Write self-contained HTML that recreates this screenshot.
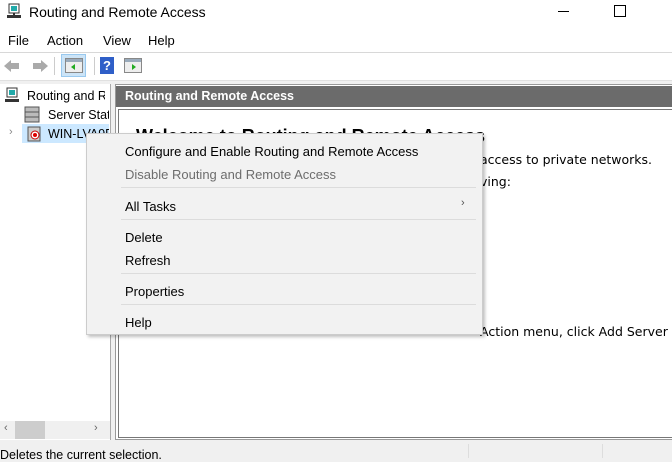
<html><head><style>
body{margin:0;width:672px;height:458px;overflow:hidden;background:#f0f0f0;font-family:"Liberation Sans",sans-serif;position:relative;font-size:12.5px;color:#000}
.a{position:absolute}
.mi{position:absolute;left:38px;font-size:13px}
.sep{position:absolute;left:34px;right:6px;height:1px;background:#dcdcdc}
</style></head><body>
<div class="a" style="left:0;top:0;width:672px;height:52px;background:#fff"></div>
<svg class="a" style="left:6px;top:3px" width="16" height="16"><rect x="3" y="1" width="10" height="9" fill="#fff" stroke="#333"/><rect x="5" y="3" width="6" height="5" fill="#2aa"/><rect x="1" y="12" width="14" height="3" fill="#333"/><rect x="7" y="10" width="2" height="2" fill="#333"/></svg>
<div class="a" style="left:29px;top:4px;font-size:14px">Routing and Remote Access</div>
<div class="a" style="left:558px;top:11px;width:11px;height:1px;background:#000"></div>
<div class="a" style="left:614px;top:5px;width:10px;height:10px;border:1px solid #000"></div>
<div class="a" style="left:8px;top:33px;font-size:13px">File</div>
<div class="a" style="left:47px;top:33px;font-size:13px">Action</div>
<div class="a" style="left:103px;top:33px;font-size:13px">View</div>
<div class="a" style="left:148px;top:33px;font-size:13px">Help</div>
<div class="a" style="left:0;top:52px;width:672px;height:1px;background:#d8d8d8"></div>
<div class="a" style="left:0;top:53px;width:672px;height:27px;background:#fff"></div>
<div class="a" style="left:0;top:80px;width:672px;height:4px;background:#f0f0f0;border-top:1px solid #e0e0e0"></div>
<svg class="a" style="left:2px;top:58px" width="48" height="16"><path d="M2 8 L9 2 V5 H17 V11 H9 V14Z" fill="#aaa"/><path d="M46 8 L39 2 V5 H31 V11 H39 V14Z" fill="#aaa"/></svg>
<div class="a" style="left:54px;top:57px;width:1px;height:18px;background:#ccc"></div>
<div class="a" style="left:61px;top:54px;width:25px;height:23px;background:#cce4f7;border:1px solid #99c9ef;box-sizing:border-box"></div>
<svg class="a" style="left:65px;top:58px" width="18" height="15"><rect x=".5" y=".5" width="17" height="14" fill="#eee" stroke="#888"/><rect x="1" y="1" width="16" height="3" fill="#9ab"/><path d="M10 6 L6 9 L10 12Z" fill="#2a2"/></svg>
<div class="a" style="left:94px;top:57px;width:1px;height:18px;background:#ccc"></div>
<div class="a" style="left:100px;top:57px;width:14px;height:17px;background:#2f5fc8;color:#fff;font-weight:bold;font-size:13px;text-align:center;line-height:17px">?</div>
<svg class="a" style="left:124px;top:58px" width="18" height="15"><rect x=".5" y=".5" width="17" height="14" fill="#eee" stroke="#888"/><rect x="1" y="1" width="16" height="3" fill="#9ab"/><path d="M8 6 L12 9 L8 12Z" fill="#2a2"/></svg>
<div class="a" style="left:0;top:84px;width:110px;height:356px;background:#fff;border-right:1px solid #aaa"></div>
<svg class="a" style="left:4px;top:87px" width="16" height="16"><rect x="3" y="1" width="10" height="9" fill="#fff" stroke="#333"/><rect x="5" y="3" width="6" height="5" fill="#2aa"/><rect x="1" y="12" width="14" height="3" fill="#333"/></svg>
<div class="a" style="left:27px;top:89px;width:78px;overflow:hidden;white-space:nowrap">Routing and Remote</div>
<svg class="a" style="left:24px;top:106px" width="18" height="17"><rect x="1" y="1" width="14" height="15" fill="#bbb" stroke="#555"/><path d="M1 6H15M1 11H15" stroke="#555"/></svg>
<div class="a" style="left:48px;top:108px;width:61px;overflow:hidden;white-space:nowrap">Server Status</div>
<div class="a" style="left:22px;top:124px;width:87px;height:19px;background:#cce8ff"></div>
<div class="a" style="left:9px;top:126px;color:#888;font-size:11px">›</div>
<svg class="a" style="left:26px;top:125px" width="18" height="17"><rect x="2" y="2" width="12" height="14" fill="#ccc" stroke="#555"/><circle cx="9" cy="10" r="4" fill="#fff" stroke="#c00"/><circle cx="9" cy="10" r="2" fill="#d00"/></svg>
<div class="a" style="left:48px;top:127px;width:61px;overflow:hidden;white-space:nowrap">WIN-LVA9BEFG</div>
<div class="a" style="left:0;top:421px;width:110px;height:18px;background:#f0f0f0"></div>
<div class="a" style="left:15px;top:421px;width:30px;height:18px;background:#cdcdcd"></div>
<div class="a" style="left:4px;top:422px;color:#666;font-size:11px">‹</div>
<div class="a" style="left:94px;top:422px;color:#666;font-size:11px">›</div>
<div class="a" style="left:115px;top:84px;width:557px;height:356px;border:1px solid #999;border-right:none;background:#fff;box-sizing:border-box"></div>
<div class="a" style="left:116px;top:86px;width:556px;height:21px;background:#6b6b6b;color:#fff;font-weight:bold;font-size:12.5px;line-height:21px;padding-left:9px;box-sizing:border-box">Routing and Remote Access</div>
<div class="a" style="left:118px;top:109px;width:554px;height:329px;border:1px solid #777;border-right:none;box-sizing:border-box"></div>
<div class="a" style="left:136px;top:126px;font-weight:bold;font-size:18px">Welcome to Routing and Remote Access</div>
<div class="a" style="left:480px;top:152px;font-family:'DejaVu Sans',sans-serif;font-size:12.5px">access to private networks.</div>
<div class="a" style="left:480px;top:174px;font-family:'DejaVu Sans',sans-serif;font-size:12.5px">ving:</div>
<div class="a" style="left:480px;top:324px;font-family:'DejaVu Sans',sans-serif;font-size:12.5px;white-space:nowrap">Action menu, click Add Server</div>
<div class="a" style="left:0;top:448px;font-size:12.5px">Deletes the current selection.</div>
<div class="a" style="left:468px;top:444px;width:1px;height:14px;background:#ddd"></div>
<div class="a" style="left:602px;top:444px;width:1px;height:14px;background:#ddd"></div>
<div class="a" style="left:86px;top:133px;width:397px;height:202px;background:#f2f2f2;border:1px solid #ccc;box-sizing:border-box;box-shadow:2px 2px 3px rgba(0,0,0,.25)">
<div class="mi" style="top:10px">Configure and Enable Routing and Remote Access</div>
<div class="mi" style="top:33px;color:#6d6d6d">Disable Routing and Remote Access</div>
<div class="sep" style="top:53px"></div>
<div class="mi" style="top:65px">All Tasks</div>
<div class="a" style="left:374px;top:63px;color:#555;font-size:11px">›</div>
<div class="sep" style="top:85px"></div>
<div class="mi" style="top:96px">Delete</div>
<div class="mi" style="top:119px">Refresh</div>
<div class="sep" style="top:139px"></div>
<div class="mi" style="top:150px">Properties</div>
<div class="sep" style="top:170px"></div>
<div class="mi" style="top:181px">Help</div>
</div>
</body></html>
